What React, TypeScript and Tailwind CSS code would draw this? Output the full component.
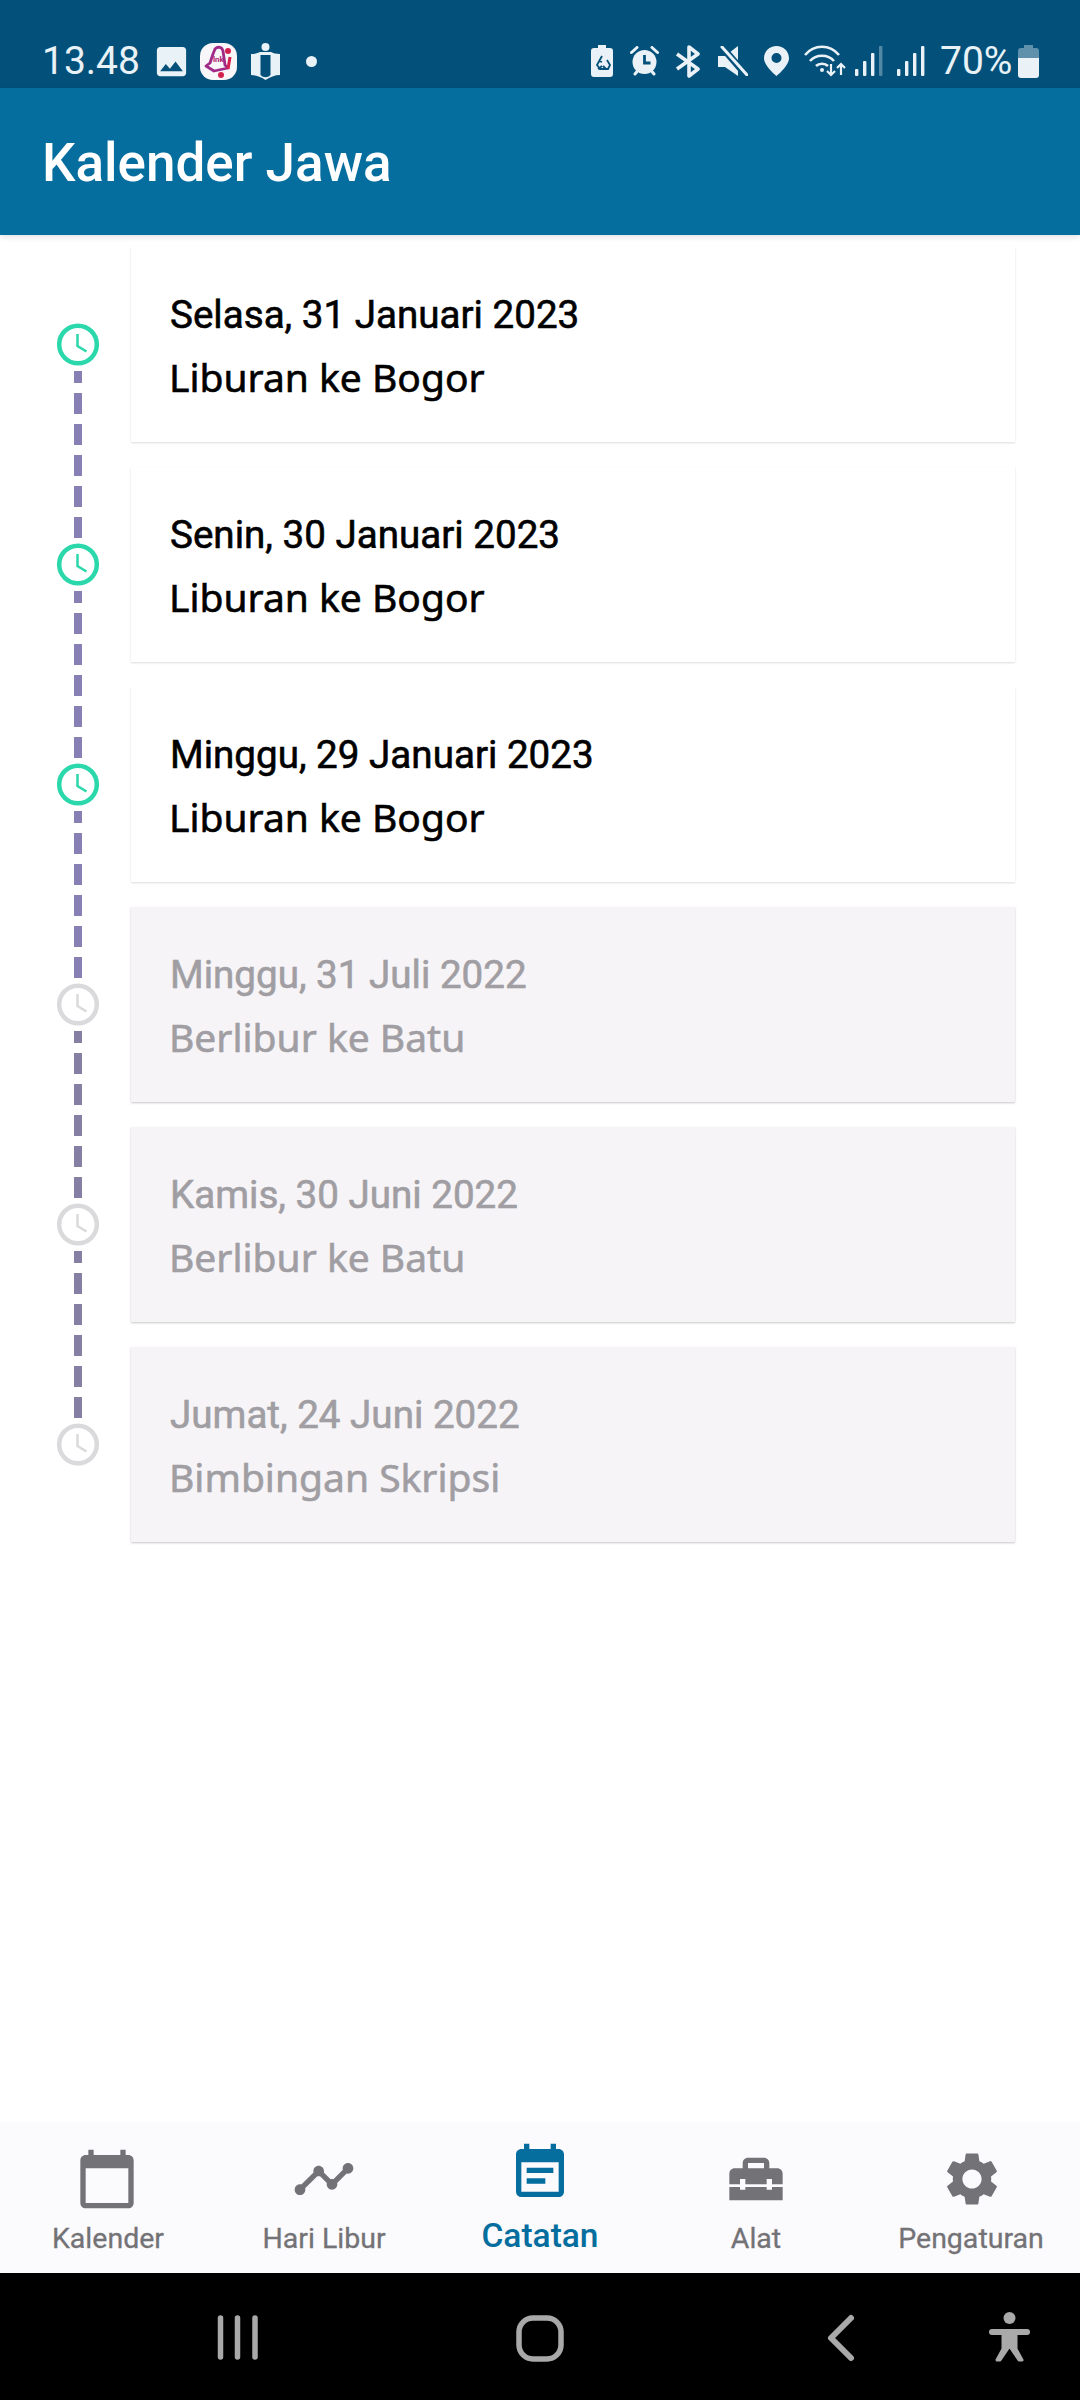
import React from 'react';
import { MdCalendarToday, MdTimeline, MdEventNote, MdHomeRepairService, MdSettings, MdImage } from 'react-icons/md';

const notes = [
  { date: 'Selasa, 31 Januari 2023', title: 'Liburan ke Bogor', past: false },
  { date: 'Senin, 30 Januari 2023', title: 'Liburan ke Bogor', past: false },
  { date: 'Minggu, 29 Januari 2023', title: 'Liburan ke Bogor', past: false },
  { date: 'Minggu, 31 Juli 2022', title: 'Berlibur ke Batu', past: true },
  { date: 'Kamis, 30 Juni 2022', title: 'Berlibur ke Batu', past: true },
  { date: 'Jumat, 24 Juni 2022', title: 'Bimbingan Skripsi', past: true },
];

function ClockDot({ past }: { past: boolean }) {
  const color = past ? '#dadadc' : '#2bd8ab';
  return (
    <svg width="42" height="43" viewBox="0 0 42 43" fill="none" className="shrink-0">
      <circle cx="21" cy="21.5" r="18.800" stroke={color} strokeWidth="4.500" />
      <path d="M20.500 11v12l9 5.500" stroke={color} strokeWidth="2.500" />
    </svg>
  );
}

function Signal({ dim }: { dim?: boolean }) {
  return (
    <svg width="28" height="30" viewBox="0 0 28 30" fill="#eaf2f7">
      <rect x="0" y="23" width="3.400" height="7" rx="1" />
      <rect x="8" y="15" width="3.400" height="15" rx="1" />
      <rect x="16" y="7" width="3.400" height="23" rx="1" />
      <rect x="24" y="0" width="3.400" height="30" rx="1" opacity={dim ? 0.35 : 1} />
    </svg>
  );
}

function StatusBar() {
  return (
    <div className="h-[88px] bg-[#03517a] pt-[34px] pl-[42px] pr-[41px] flex items-center justify-between text-[#e9f2f7] font-['Roboto',sans-serif] text-[39px]">
      <div className="flex items-center">
        <span className="w-[110px]">13.48</span>
        <MdImage className="w-[39px] h-[39px]" />
        <svg width="37" height="37" viewBox="0 0 37 37" className="ml-[9px]">
          <rect width="37" height="37" rx="13" fill="#f8f6f8" />
          <path d="M15 6c3-3 7-2 8 2l2 14 3 3-14 3-8-5 4-3 3-9z" fill="none" stroke="#a02a88" strokeWidth="2.800" strokeLinejoin="round" />
          <circle cx="28" cy="8" r="3" fill="#d3214f" />
          <circle cx="21" cy="32" r="3" fill="#d3214f" />
          <path d="M30 14l-2 12" stroke="#d3214f" strokeWidth="3" />
          <text x="13" y="19" fontSize="8" fontWeight="700" fill="#b02470" fontFamily="Roboto, sans-serif">lnk</text>
        </svg>
        <svg width="29" height="37" viewBox="0 0 29 37" className="ml-[14px]">
          <circle cx="14.500" cy="4" r="4" fill="#e9f2f7" />
          <path d="M0 11c4 0 7-1 9-2h11c2 1 5 2 9 2v21c-5 0-10 2-14.500 5C10 34 5 32 0 32z" fill="#e9f2f7" />
          <path d="M9.500 12h10v20c-3 3-7 3-10 0z" fill="#03517a" />
        </svg>
        <span className="w-[11px] h-[11px] rounded-full bg-[#e9f2f7] ml-[26px]" />
      </div>
      <div className="flex items-center">
        <svg width="22" height="32" viewBox="0 0 22 32" fill="#eaf2f7">
          <path d="M7 0h8v3h4a3 3 0 0 1 3 3v23a3 3 0 0 1-3 3H3a3 3 0 0 1-3-3V6a3 3 0 0 1 3-3h4z" />
          <path d="M11 11l-5 9 3 4h8l2-4-3-5M8 16l3 1M7 24l4-3M15 24l-3-3" fill="none" stroke="#03517a" strokeWidth="1.800" />
        </svg>
        <svg width="29" height="30" viewBox="0 0 29 30" className="ml-[17px]">
          <circle cx="14.500" cy="16" r="12" fill="#eaf2f7" />
          <path d="M14.500 9v8h6" fill="none" stroke="#03517a" strokeWidth="2.800" />
          <path d="M1.500 6.500L7 1.500M27.500 6.500L22 1.500M5 28l2.500-3M24 28l-2.500-3" stroke="#eaf2f7" strokeWidth="3" strokeLinecap="round" />
        </svg>
        <svg width="29" height="33" viewBox="0 0 29 33" fill="none" stroke="#eaf2f7" strokeWidth="3.600" strokeLinejoin="round" className="ml-[15px]">
          <path d="M3 9l21 15-9 7V2l9 7L3 24" />
        </svg>
        <svg width="30" height="30" viewBox="0 0 30 30" className="ml-[15px]">
          <path d="M0 10h7L20 0v30L7 21H0z" fill="#eaf2f7" />
          <path d="M3 0l26 30" stroke="#03517a" strokeWidth="7" />
          <path d="M4 1l25 28" stroke="#eaf2f7" strokeWidth="3" strokeLinecap="round" />
        </svg>
        <svg width="25" height="30" viewBox="0 0 25 30" className="ml-[16px]">
          <path fillRule="evenodd" fill="#eaf2f7" d="M12.500 0C5.600 0 0 5.400 0 12.200 0 20 12.500 30 12.500 30S25 20 25 12.200C25 5.400 19.400 0 12.500 0zm0 7a5 5 0 1 1 0 10 5 5 0 0 1 0-10z" />
        </svg>
        <svg width="42" height="32" viewBox="0 0 42 32" fill="none" stroke="#eaf2f7" strokeWidth="2.600" className="ml-[15px]">
          <path d="M1 10c9-11 25-11 34 0M6 16c6-7 18-7 24 0M12 21c3-3 9-3 12 0" />
          <circle cx="18" cy="25" r="2" fill="#eaf2f7" stroke="none" />
          <path d="M27 19v11M23 26l4 4 4-4M37 30V19M33 23l4-4 4 4" strokeWidth="2.200" />
        </svg>
        <div className="ml-[9px]"><Signal dim /></div>
        <div className="ml-[14px]"><Signal /></div>
        <span className="ml-[15px] w-[78px]">70%</span>
        <svg width="21" height="33" viewBox="0 0 21 33" fill="#eaf2f7">
          <path d="M6 0h9v3h3a3 3 0 0 1 3 3v7H0V6a3 3 0 0 1 3-3h3z" opacity="0.4" />
          <path d="M0 13h21v17a3 3 0 0 1-3 3H3a3 3 0 0 1-3-3z" />
        </svg>
      </div>
    </div>
  );
}

function NoteRow({ note, last }: { note: (typeof notes)[number]; last: boolean }) {
  const dash = note.past ? 'bg-[#857fa3]' : 'bg-[#8680b4]';
  return (
    <div className="flex h-[220px]">
      <div className="w-[131px] pl-[57px] pt-[76px] shrink-0">
        <div className="w-[42px] flex flex-col items-center">
          <ClockDot past={note.past} />
          {!last && (
            <div className="flex flex-col items-center gap-[10px] mt-[5px]">
              <div className={`w-[8px] h-[12px] ${dash}`} />
              <div className={`w-[8px] h-[21px] ${dash}`} />
              <div className={`w-[8px] h-[21px] ${dash}`} />
              <div className={`w-[8px] h-[21px] ${dash}`} />
              <div className={`w-[8px] h-[21px] ${dash}`} />
              <div className={`w-[8px] h-[21px] ${dash}`} />
            </div>
          )}
        </div>
      </div>
      <div
        className={
          note.past
            ? 'w-[884px] h-[195px] pl-[39px] pt-[45px] bg-[#f6f4f7] shadow-[0_1px_2px_rgba(0,0,0,0.22)]'
            : 'w-[884px] h-[195px] pl-[39px] pt-[45px] bg-white shadow-[0_1px_2px_rgba(0,0,0,0.14)]'
        }
      >
        <p className={`font-['Roboto',sans-serif] text-[38.6px] leading-[46px] [-webkit-text-stroke:0.6px] ${note.past ? 'text-[#a09ea3]' : 'text-black'}`}>{note.date}</p>
        <p className={`font-['Noto_Sans',sans-serif] text-[39px] leading-[46px] mt-[16px] -ml-[1px] [-webkit-text-stroke:0.6px] ${note.past ? 'text-[#a09ea3]' : 'text-black'}`}>{note.title}</p>
      </div>
    </div>
  );
}

function BottomNav() {
  return (
    <div className="h-[151px] bg-[#fbfafc] grid grid-cols-5 font-['Roboto',sans-serif] text-[#737276]">
      <div className="flex flex-col items-center pt-[25px]">
        <MdCalendarToday className="w-[64px] h-[64px] -translate-x-[1px]" />
        <span className="text-[28.5px] leading-[32px] mt-[12px] [-webkit-text-stroke:0.3px]">Kalender</span>
      </div>
      <div className="flex flex-col items-center pt-[25px]">
        <MdTimeline className="w-[64px] h-[64px]" />
        <span className="text-[28.5px] leading-[32px] mt-[12px] [-webkit-text-stroke:0.3px]">Hari Libur</span>
      </div>
      <div className="flex flex-col items-center pt-[19px] text-[#056e9f]">
        <MdEventNote className="w-[64px] h-[64px]" />
        <span className="text-[33.5px] leading-[38px] mt-[12px] font-medium">Catatan</span>
      </div>
      <div className="flex flex-col items-center pt-[25px]">
        <MdHomeRepairService className="w-[64px] h-[64px]" />
        <span className="text-[28.5px] leading-[32px] mt-[12px] [-webkit-text-stroke:0.3px]">Alat</span>
      </div>
      <div className="flex flex-col items-center pt-[25px]">
        <MdSettings className="w-[64px] h-[64px]" />
        <span className="text-[28.5px] leading-[32px] mt-[12px] -translate-x-[1px] [-webkit-text-stroke:0.3px]">Pengaturan</span>
      </div>
    </div>
  );
}

function SystemNav() {
  return (
    <div className="h-[127px] bg-black">
      {/* soft keys drawn as one strip */}
      <svg width="1080" height="127" viewBox="0 0 1080 127" fill="none" stroke="#a9a9a9" strokeLinecap="round" strokeLinejoin="round">
        <path d="M220.500 45v39M237.500 45v39M255 45v39" strokeWidth="5.500" />
        <rect x="519" y="45" width="42" height="41" rx="14" strokeWidth="5.500" />
        <path d="M851 45l-20 20 20 20" strokeWidth="6" />
        <circle cx="1009.500" cy="45" r="6" fill="#a9a9a9" stroke="none" />
        <path d="M992 59h35" strokeWidth="6" />
        <path d="M1003 60h13v16l6 11h-3l-9.500-14-9.500 14h-3l6-11z" fill="#a9a9a9" strokeWidth="3" />
      </svg>
    </div>
  );
}

export default function App() {
  return (
    <div className="w-[1080px] h-[2400px] bg-white flex flex-col overflow-hidden">
      <StatusBar />
      <header className="h-[147px] bg-[#056e9f] flex items-center pl-[42px] pt-[4px] relative z-10 shadow-[0_2px_6px_rgba(0,0,0,0.12)]">
        <h1 className="font-['Roboto',sans-serif] font-medium text-[53px] text-white">Kalender Jawa</h1>
      </header>
      <main className="flex-1 pt-[12px]">
        {notes.map((note, i) => (
          <NoteRow key={i} note={note} last={i === notes.length - 1} />
        ))}
      </main>
      <BottomNav />
      <SystemNav />
    </div>
  );
}
